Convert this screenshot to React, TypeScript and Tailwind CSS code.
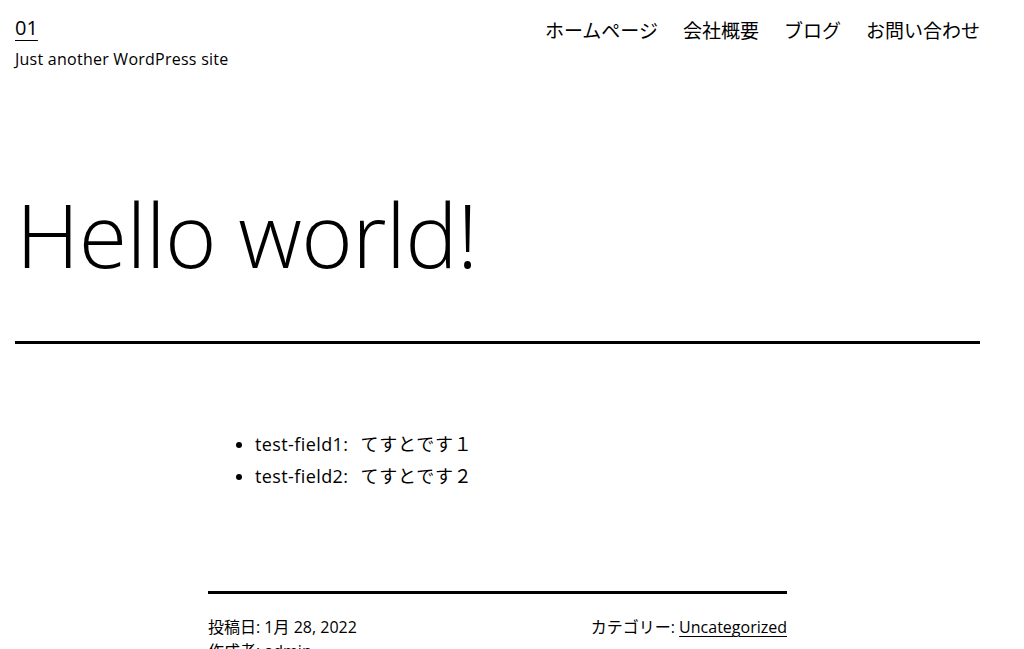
import React from 'react';

const NAV = ['ホームページ', '会社概要', 'ブログ', 'お問い合わせ'];

const FIELDS = [
  { key: 'test-field1', value: 'てすとです１' },
  { key: 'test-field2', value: 'てすとです２' },
];

const font = "font-['Open_Sans','Noto_Sans_CJK_JP',sans-serif]";

const App: React.FC = () => {
  return (
    <div className={`min-h-screen bg-white text-black ${font}`}>
      <div className="w-[965px] ml-[15px]">
        {/* Header */}
        <header className="flex items-start justify-between pt-[14px]">
          <div>
            <a href="#" className="text-[20px] leading-[28px] underline underline-offset-[5px] decoration-1">
              01
            </a>
            <p className="text-[16px] leading-[24px] mt-[5px] tracking-[0.25px]">Just another WordPress site</p>
          </div>
          <nav className="flex gap-[25px] pt-[5px] text-[19px] leading-[24px]">
            {NAV.map((item) => (
              <a key={item} href="#">{item}</a>
            ))}
          </nav>
        </header>

        {/* Title */}
        <h1 className="mt-[111px] ml-[1px] text-[88px] leading-[104px] font-light tracking-[-0.6px]">
          Hello world!
        </h1>
        <hr className="mt-[55px] border-0 h-[3px] bg-black" />

        {/* Content */}
        <div className="w-[579px] mx-auto">
          <ul className="list-disc pl-[47px] mt-[84px] text-[18px] leading-[32px]">
            {FIELDS.map((f) => (
              <li key={f.key}>
                <span className="tracking-[0.4px]">{f.key}:</span>
                <span className="ml-[12px] tracking-[0.8px]">{f.value}</span>
              </li>
            ))}
          </ul>

          <hr className="mt-[99px] border-0 h-[3px] bg-black" />

          <footer className="flex justify-between mt-[21px] text-[16px] leading-[24px]">
            <div>
              <p>投稿日: 1月 28, 2022</p>
              <p>作成者: admin</p>
            </div>
            <p>
              カテゴリー: <a href="#" className="underline underline-offset-[3px] decoration-1">Uncategorized</a>
            </p>
          </footer>
        </div>
      </div>
    </div>
  );
};

export default App;
